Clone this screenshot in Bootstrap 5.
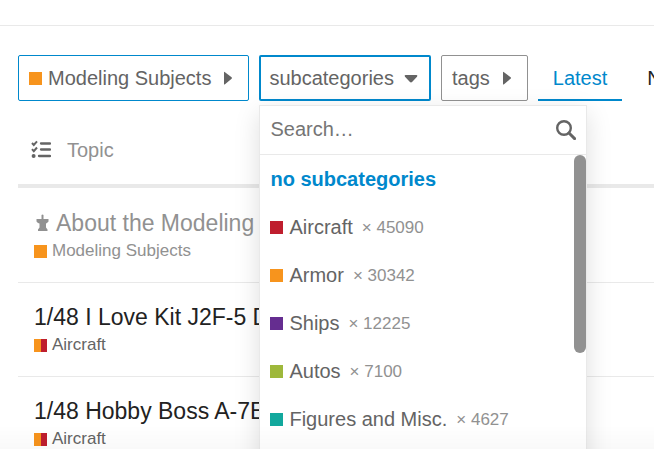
<!DOCTYPE html>
<html lang="en">
<head>
<meta charset="utf-8">
<meta name="viewport" content="width=device-width, initial-scale=1">
<title>Modeling Subjects - Latest topics</title>
<link href="https://cdn.jsdelivr.net/npm/bootstrap@5.3.0/dist/css/bootstrap.min.css" rel="stylesheet">
<style>
  body { font-family: "Liberation Sans", Arial, sans-serif; font-size: 20px; line-height: 24px; color: #222; }
  a { text-decoration: none; }
  .site-top { height: 26px; border-bottom: 1px solid #e9e9e9; }
  .page-pad { padding: 29px 0 0 18px; }
  .filters { gap: 10px; }
  .drop-btn { height: 46px; padding: 0 11px 0 10px; border: 1px solid #919191; border-radius: 2px; background: #fff; color: #646464; }
  .drop-btn.chosen { border-color: #0088cc; }
  .drop-btn.chosen .swatch { margin-right: 6px; }
  .drop-btn.opened { border: 2px solid #0088cc; padding: 0 9px 0 8px; }
  .drop-btn svg { fill: #646464; }
  .tab-link { height: 46px; padding: 2px 15px 0; color: #222; border-bottom: 2px solid transparent; }
  .tab-link.active { color: #0088cc; border-color: #0088cc; }
  .swatch { width: 13px; height: 13px; flex: none; }
  .c-orange { background: #f7941d; }
  .c-red { background: #bf1e2e; }
  .c-purple { background: #652d90; }
  .c-green { background: #9eb83b; }
  .c-teal { background: #12a89d; }
  .c-split { background: linear-gradient(90deg, #f7941d 50%, #bf1e2e 50%); }
  .topics { border-collapse: separate; border-spacing: 0; }
  .topics th { padding: 37px 13px 22px; border-bottom: 4px solid #e9e9e9; font-weight: 400; color: #919191; }
  .topics td { padding: 20px 16px; border-bottom: 1px solid #e9e9e9; }
  .topics tr:first-child td { padding-top: 21px; }
  .topic-title { font-size: 23px; line-height: 28px; color: #222; }
  .topic-cat { gap: 5px; font-size: 17px; line-height: 22px; margin-top: 3px; color: #646464; }
  .topic-title.visited, .visited a { color: #919191; }
  .bulk { width: 20px; height: 24px; }
  .sub-menu { top: 50px; left: 0; width: 328px; z-index: 5; background: #fff; border: 1px solid #e9e9e9; box-shadow: 0 8px 24px rgba(0,0,0,.13); }
  .search-row { height: 49px; padding: 0 10px; border-bottom: 1px solid #e9e9e9; }
  .search-row input { min-width: 0; padding: 0 0 2px; color: #222; }
  .search-row input::placeholder { color: #757575; opacity: 1; }
  .choices { padding-bottom: 48px; }
  .choice { height: 48px; padding: 0 10px; color: #646464; gap: 6px; }
  .choice-none { color: #0088cc; font-weight: 700; }
  .tally { font-size: 17px; color: #919191; margin-left: 3px; padding-top: 2px; }
  .thumb { top: 0; right: 0; width: 12px; height: 198px; border-radius: 6px; background: #919191; }
  .foot-fade { height: 24px; z-index: 6; pointer-events: none; background: linear-gradient(rgba(0,0,0,0), rgba(0,0,0,.025)); }
</style>
</head>
<body>
<div class="vh-100 overflow-hidden">
  <header class="site-top"></header>
  <main class="page-pad">
    <nav class="filters d-flex text-nowrap" aria-label="Topic filters">
      <button type="button" class="drop-btn chosen d-flex flex-shrink-0 align-items-center">
        <span class="swatch c-orange"></span>Modeling Subjects
        <svg class="ms-2" width="18" height="20" viewBox="0 0 18 20" aria-hidden="true"><path d="M5 4.500Q5 3.400 6 4.200L12.600 9.300Q13.400 10 12.600 10.700L6 16.200Q5 17 5 15.900Z"/></svg>
      </button>
      <div class="position-relative flex-shrink-0">
        <button type="button" class="drop-btn opened d-flex align-items-center" aria-expanded="true">subcategories
          <svg class="ms-2" width="18" height="20" viewBox="0 0 18 20" aria-hidden="true"><path d="M3.500 7H14.500Q16 7.300 15 8.800L10.300 13.800Q9 15 7.700 13.800L3 8.800Q2 7.300 3.500 7Z"/></svg>
        </button>
        <div class="sub-menu position-absolute">
          <div class="search-row d-flex align-items-center">
            <input type="text" class="border-0 bg-transparent flex-grow-1" placeholder="Search…" aria-label="Search subcategories">
            <svg width="20" height="20" viewBox="0 0 20 20" fill="none" stroke="#646464" aria-hidden="true"><circle cx="8" cy="8" r="6.800" stroke-width="2.400"/><path d="M13 13L18.600 18.600" stroke-width="2.900" stroke-linecap="round"/></svg>
          </div>
          <div class="choices position-relative">
            <a href="#" class="choice choice-none d-flex align-items-center">no subcategories</a>
            <a href="#" class="choice d-flex align-items-center"><span class="swatch c-red"></span><span>Aircraft</span><span class="tally">× 45090</span></a>
            <a href="#" class="choice d-flex align-items-center"><span class="swatch c-orange"></span><span>Armor</span><span class="tally">× 30342</span></a>
            <a href="#" class="choice d-flex align-items-center"><span class="swatch c-purple"></span><span>Ships</span><span class="tally">× 12225</span></a>
            <a href="#" class="choice d-flex align-items-center"><span class="swatch c-green"></span><span>Autos</span><span class="tally">× 7100</span></a>
            <a href="#" class="choice d-flex align-items-center"><span class="swatch c-teal"></span><span>Figures and Misc.</span><span class="tally">× 4627</span></a>
            <div class="thumb position-absolute"></div>
          </div>
        </div>
      </div>
      <button type="button" class="drop-btn d-flex flex-shrink-0 align-items-center">tags
        <svg class="ms-2" width="18" height="20" viewBox="0 0 18 20" aria-hidden="true"><path d="M5 4.500Q5 3.400 6 4.200L12.600 9.300Q13.400 10 12.600 10.700L6 16.200Q5 17 5 15.900Z"/></svg>
      </button>
      <a href="#" class="tab-link active d-flex flex-shrink-0 align-items-center">Latest</a>
      <a href="#" class="tab-link d-flex flex-shrink-0 align-items-center">New</a>
    </nav>
    <table class="topics w-100">
      <thead>
        <tr><th scope="col"><div class="d-flex align-items-center gap-3">
          <svg class="bulk" viewBox="0 0 20 24" fill="none" stroke="#646464" aria-hidden="true"><path d="M10 5.500H19M10 11.500H19M8 18H19" stroke-width="2.300" stroke-linecap="round"/><path d="M1 5L2.800 7L6 3.300M1 11.200L2.800 13.200L6 9.500" stroke-width="2"/><circle cx="2.600" cy="18" r="2" fill="#646464" stroke="none"/></svg>
          <span>Topic</span></div></th></tr>
      </thead>
      <tbody>
        <tr><td>
          <div class="topic-title visited d-flex align-items-center text-nowrap">
            <svg class="me-1" width="18" height="20" viewBox="0 0 18 20" fill="#919191" aria-hidden="true"><path d="M7.500 2Q8.500 1 9.500 2V6H14.500V8.500L13 10L12 10.500V14.500L13.500 16.500V18H4V16.500L5.500 14.500V10.500L4 10L2.500 8.500V6H7.500Z"/></svg>
            <a href="#">About the Modeling Subjects category</a>
          </div>
          <div class="topic-cat visited d-flex align-items-center"><span class="swatch c-orange"></span><a href="#">Modeling Subjects</a></div>
        </td></tr>
        <tr><td>
          <a href="#" class="topic-title d-block text-nowrap">1/48 I Love Kit J2F-5 Duck</a>
          <div class="topic-cat d-flex align-items-center"><span class="swatch c-split"></span><a href="#" class="text-reset">Aircraft</a></div>
        </td></tr>
        <tr><td>
          <a href="#" class="topic-title d-block text-nowrap">1/48 Hobby Boss A-7E</a>
          <div class="topic-cat d-flex align-items-center"><span class="swatch c-split"></span><a href="#" class="text-reset">Aircraft</a></div>
        </td></tr>
      </tbody>
    </table>
  </main>
  <div class="foot-fade position-fixed bottom-0 start-0 end-0"></div>
</div>
<script src="https://cdn.jsdelivr.net/npm/bootstrap@5.3.0/dist/js/bootstrap.bundle.min.js"></script>
</body>
</html>
